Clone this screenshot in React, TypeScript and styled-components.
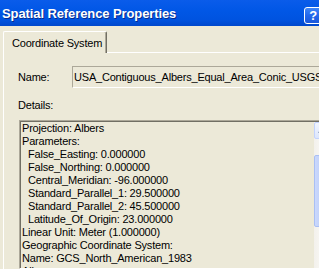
import React from 'react';
import styled, { createGlobalStyle } from 'styled-components';

const GlobalStyle = createGlobalStyle`
    html, body {
        margin: 0;
        padding: 0;
        overflow: hidden;
        background: #ECE9D8;
    }
    body {
        font-family: "Liberation Sans", Arial, sans-serif;
        font-size: 11px;
        letter-spacing: -0.2px;
        color: #000000;
    }
`;

const Window = styled.div`
    width: 340px;
    height: 269px;
    display: flex;
    flex-direction: column;
    background: #ECE9D8;
    overflow: hidden;
`;

const TitleBar = styled.div`
    flex: none;
    height: 26px;
    display: flex;
    align-items: center;
    justify-content: space-between;
    padding: 0 18px 0 2px;
    background: linear-gradient(to bottom, #0A5CEA 0%, #0157E6 40%, #0053E0 75%, #0048CC 100%);
`;

const Title = styled.div`
    font-family: "Liberation Sans", Arial, sans-serif;
    font-weight: bold;
    font-size: 13px;
    letter-spacing: -0.1px;
    color: #FFFFFF;
    text-shadow: 1px 1px 0 #0A2C8C;
    white-space: nowrap;
`;

const HelpButton = styled.div`
    align-self: flex-end;
    margin-bottom: 2px;
    width: 18px;
    height: 17px;
    box-sizing: border-box;
    border: 1px solid #FFFFFF;
    border-radius: 3px;
    background: linear-gradient(to bottom, #3D85F8 0%, #2468EC 50%, #1A58DA 100%);
    color: #FFFFFF;
    font-weight: bold;
    font-size: 13px;
    line-height: 15px;
    text-align: center;
`;

const Body = styled.div`
    flex: 1;
    display: flex;
    flex-direction: column;
    padding: 5px 0 0 3px;
    min-height: 0;
`;

const TabStrip = styled.div`
    flex: none;
    display: flex;
    height: 22px;
`;

const Tab = styled.div`
    width: 104px;
    box-sizing: border-box;
    height: 22px;
    display: flex;
    align-items: center;
    padding-left: 8px;
    border-top: 1px solid #FFFFFF;
    border-left: 1px solid #FFFFFF;
    border-right: 1px solid #716F64;
    border-radius: 2px 2px 0 0;
    box-shadow: inset -1px 0 0 #ACA899;
    white-space: nowrap;
`;

const TabFiller = styled.div`
    flex: 1;
    border-bottom: 1px solid #FFFFFF;
`;

const Panel = styled.div`
    flex: 1;
    display: flex;
    flex-direction: column;
    border-left: 1px solid #FFFFFF;
    padding: 13px 8px 0 14px;
    min-height: 0;
`;

const NameRow = styled.div`
    display: grid;
    grid-template-columns: 54px 1fr;
    align-items: center;
    height: 22px;
`;

const Label = styled.div`
    white-space: nowrap;
`;

const Field = styled.div`
    height: 22px;
    box-sizing: border-box;
    display: flex;
    align-items: center;
    padding-left: 1px;
    border-top: 1px solid #ACA899;
    border-left: 1px solid #ACA899;
    border-bottom: 1px solid #FFFFFF;
    border-right: 1px solid #FFFFFF;
    white-space: nowrap;
    overflow: hidden;
`;

const DetailsLabel = styled.div`
    margin-top: 10px;
    line-height: 14px;
`;

const DetailsBox = styled.div`
    flex: 1;
    margin: 8px 0 0 1px;
    display: flex;
    min-height: 0;
    border-top: 1px solid #ACA899;
    border-left: 1px solid #ACA899;
    border-bottom: 1px solid #FFFFFF;
    border-right: 1px solid #FFFFFF;
    box-shadow: inset 1px 1px 0 #716F64;
    padding: 1px 0 0 1px;
    overflow: hidden;
`;

const DetailsText = styled.div`
    flex: 1;
    padding-left: 1px;
    line-height: 13px;
`;

const Line = styled.div<{ indent?: boolean }>`
    padding-left: ${(props) => (props.indent ? 6 : 0)}px;
    white-space: nowrap;
`;

const ScrollBar = styled.div`
    width: 17px;
    flex: none;
    display: flex;
    flex-direction: column;
    background: linear-gradient(to right, #F3F1EC 0%, #FEFEFB 100%);
`;

const ScrollButton = styled.div`
    height: 17px;
    box-sizing: border-box;
    display: flex;
    align-items: center;
    justify-content: center;
    border: 1px solid #C3D3FD;
    border-radius: 2px;
    background: linear-gradient(to bottom, #F2F6FE 0%, #DCE6FC 100%);
`;

const TrackGap = styled.div`
    height: 16px;
`;

const Thumb = styled.div`
    height: 72px;
    box-sizing: border-box;
    display: flex;
    flex-direction: column;
    align-items: center;
    justify-content: center;
    gap: 1px;
    border: 1px solid #A9BFF4;
    border-radius: 2px;
    background: linear-gradient(to right, #CAD8FC 0%, #BCCEF9 50%, #B5C8F7 100%);
`;

const Grip = styled.div`
    width: 7px;
    height: 1px;
    background: #EEF4FE;
    box-shadow: 0 1px 0 #8CA8E8;
`;

const lines: { text: string; indent?: boolean }[] = [
    { text: 'Projection: Albers' },
    { text: 'Parameters:' },
    { text: 'False_Easting: 0.000000', indent: true },
    { text: 'False_Northing: 0.000000', indent: true },
    { text: 'Central_Meridian: -96.000000', indent: true },
    { text: 'Standard_Parallel_1: 29.500000', indent: true },
    { text: 'Standard_Parallel_2: 45.500000', indent: true },
    { text: 'Latitude_Of_Origin: 23.000000', indent: true },
    { text: 'Linear Unit: Meter (1.000000)' },
    { text: 'Geographic Coordinate System:' },
    { text: 'Name: GCS_North_American_1983' },
    { text: 'Alias:' },
];

function App() {
    return (
        <>
            <GlobalStyle />
            <Window>
                <TitleBar>
                    <Title>Spatial Reference Properties</Title>
                    <HelpButton>?</HelpButton>
                </TitleBar>
                <Body>
                    <TabStrip>
                        <Tab>Coordinate System</Tab>
                        <TabFiller />
                    </TabStrip>
                    <Panel>
                        <NameRow>
                            <Label>Name:</Label>
                            <Field>USA_Contiguous_Albers_Equal_Area_Conic_USGS</Field>
                        </NameRow>
                        <DetailsLabel>Details:</DetailsLabel>
                        <DetailsBox>
                            <DetailsText>
                                {lines.map((line, i) => (
                                    <Line key={i} indent={line.indent}>{line.text}</Line>
                                ))}
                            </DetailsText>
                            <ScrollBar>
                                <ScrollButton>
                                    <svg width="9" height="6" viewBox="0 0 9 6">
                                        <path d="M1 5 L4.5 1.5 L8 5" fill="none" stroke="#4D6185" strokeWidth="2" />
                                    </svg>
                                </ScrollButton>
                                <TrackGap />
                                <Thumb>
                                    <Grip />
                                    <Grip />
                                    <Grip />
                                    <Grip />
                                </Thumb>
                            </ScrollBar>
                        </DetailsBox>
                    </Panel>
                </Body>
            </Window>
        </>
    );
}

export default App;
